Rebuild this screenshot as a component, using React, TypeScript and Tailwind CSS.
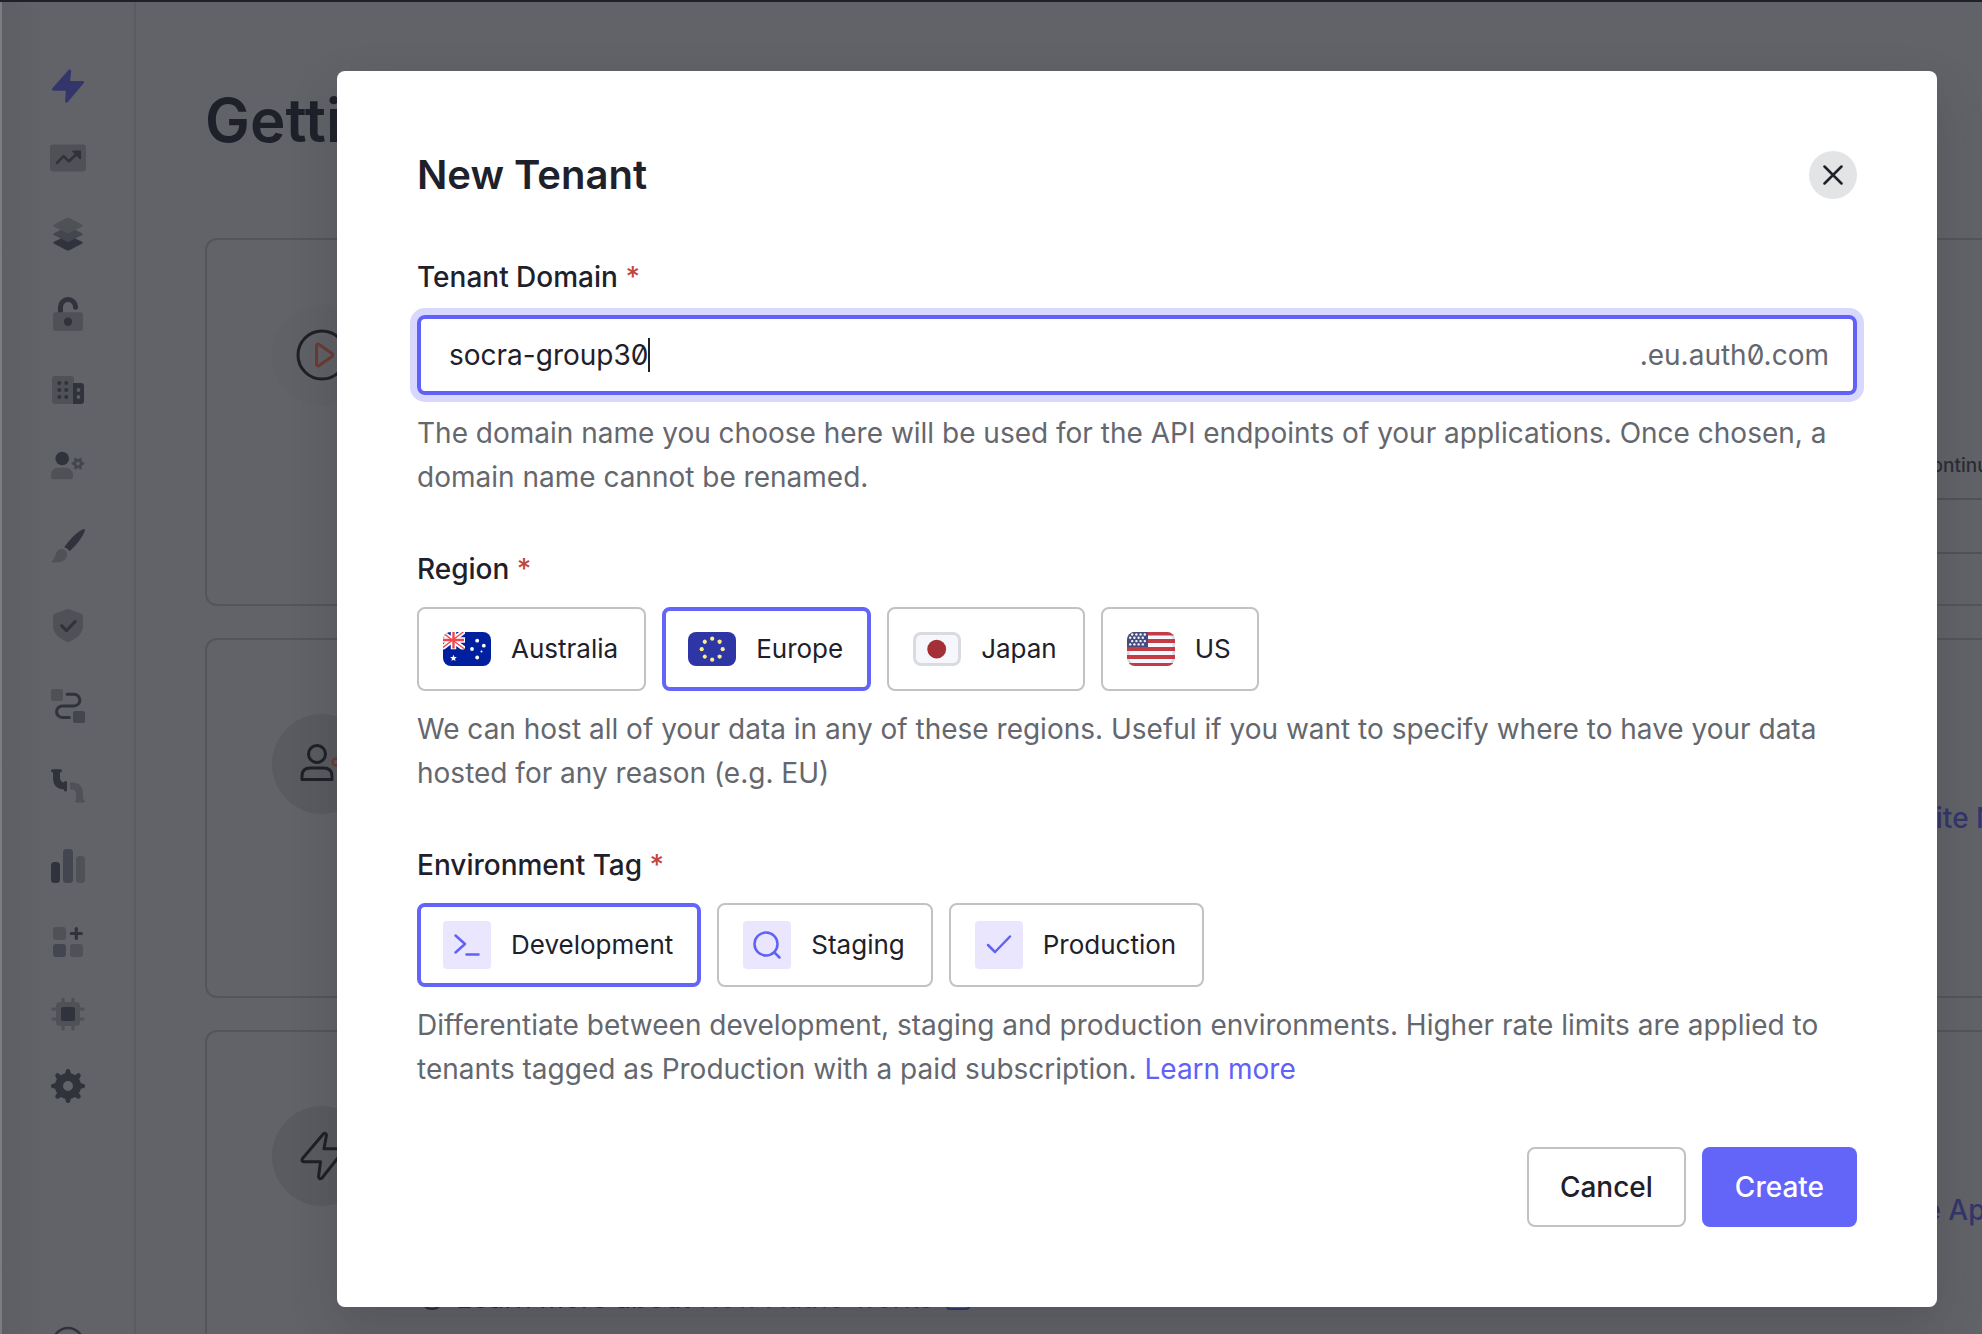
import React, { useState } from "react";

const DARK = "#30333b";
const MID = "#43464e";
const SOFT = "#505156";

type IconProps = { children: React.ReactNode };

function NavIcon({ children }: IconProps) {
  return (
    <svg viewBox="0 0 36 36" className="size-9" fill="none" aria-hidden="true">
      {children}
    </svg>
  );
}

const gearAngles = [0, 45, 90, 135, 180, 225, 270, 315];
const smallGearAngles = [0, 60, 120, 180, 240, 300];

const navItems: { label: string; height: string; icon: React.ReactNode }[] = [
  {
    label: "Getting Started",
    height: "h-18",
    icon: (
      <path
        d="M19.8 2.8 3.4 21.3h14l-.9 12L32.6 14.400h-14z"
        fill="#34356b"
        stroke="#34356b"
        strokeWidth="2.800"
        strokeLinejoin="round"
      />
    ),
  },
  {
    label: "Activity",
    height: "h-18",
    icon: (
      <>
        <rect x="0" y="4.500" width="36" height="27" rx="3" fill={SOFT} />
        <path d="M7 22.800 13.600 16.200 19 21.300 26.500 14" stroke={DARK} strokeWidth="2.600" strokeLinecap="round" strokeLinejoin="round" />
        <path d="M23 11.300h7.300v7.300z" fill={DARK} stroke={DARK} strokeWidth="1.500" strokeLinejoin="round" />
      </>
    ),
  },
  {
    label: "Applications",
    height: "h-20",
    icon: (
      <>
        <path d="M4 25.800 18 19l14 6.800c1.200.6 1.200 1.200 0 1.800l-12.500 6.600q-1.500.8-3 0L4 27.600c-1.200-.6-1.200-1.200 0-1.800z" fill={DARK} />
        <path d="M4 17.200 18 10.400l14 6.800c1.200.6 1.200 1.200 0 1.800l-12.500 6.600q-1.500.8-3 0L4 19c-1.200-.6-1.200-1.200 0-1.800z" fill={MID} />
        <path d="M4 8.600 16.500 1.900q1.500-.8 3 0L32 8.600c1.200.6 1.200 1.200 0 1.800l-12.500 6.600q-1.500.8-3 0L4 10.400c-1.200-.6-1.200-1.200 0-1.800z" fill={SOFT} />
      </>
    ),
  },
  {
    label: "Authentication",
    height: "h-20",
    icon: (
      <>
        <path d="M10.500 17v-6a7.500 7.500 0 0 1 15 0v.3" stroke={DARK} strokeWidth="5" />
        <circle cx="25.500" cy="11.300" r="2.500" fill={DARK} />
        <rect x="3" y="16.300" width="30" height="18.700" rx="3" fill={SOFT} />
        <circle cx="18" cy="25.700" r="4.200" fill={DARK} />
      </>
    ),
  },
  {
    label: "Organizations",
    height: "h-18",
    icon: (
      <>
        <rect x="2" y="4" width="22" height="28" rx="3" fill={SOFT} />
        <path d="M23 11h8a3 3 0 0 1 3 3v15a3 3 0 0 1-3 3h-8z" fill={DARK} />
        {[11, 18, 25].map((y) => (
          <g key={y} fill={DARK}>
            <circle cx="9.300" cy={y} r="2" />
            <circle cx="16.200" cy={y} r="2" />
          </g>
        ))}
        <circle cx="28.500" cy="18" r="1.900" fill="#5c5d62" />
        <circle cx="28.500" cy="25" r="1.900" fill="#5c5d62" />
      </>
    ),
  },
  {
    label: "User Management",
    height: "h-20",
    icon: (
      <>
        <circle cx="12.200" cy="10.500" r="6.800" fill={DARK} />
        <path d="M8 19.700h8a7 7 0 0 1 7 7v2.600a2 2 0 0 1-2 2H3a2 2 0 0 1-2-2v-2.600a7 7 0 0 1 7-7z" fill={SOFT} />
        <g stroke={MID} strokeWidth="2.800" strokeLinecap="round">
          {smallGearAngles.map((a) => (
            <path key={a} d="M28 11.600v-1" transform={`rotate(${a + 30} 28 15.600)`} />
          ))}
          <circle cx="28" cy="15.600" r="3.200" strokeWidth="2.800" />
        </g>
      </>
    ),
  },
  {
    label: "Branding",
    height: "h-20",
    icon: (
      <>
        <path d="M14.300 19.300C19 12 27 4 33 1.200c1.300-.5 2 .3 1.700 1.500C33 9 26 17.500 19.700 23.300q-2.300-3-5.400-4z" fill={DARK} />
        <path d="M11.500 21c3.500 0 5.500 2.500 5.500 5.800 0 6-7 8.200-14.500 7.600-1-.1-1.100-.7-.3-1.300C6 30.500 5 21 11.500 21z" fill={SOFT} />
      </>
    ),
  },
  {
    label: "Security",
    height: "h-20",
    icon: (
      <>
        <path d="M17 1.300q1-.4 2 0L31.500 5.700Q33 6.200 33 8v10c0 8-7.500 13-14 16q-1 .4-2 0C10.500 31 3 26 3 18V8q0-1.800 1.500-2.300z" fill={SOFT} />
        <path d="m11.600 17.600 4.900 5L25.200 13.500" stroke={DARK} strokeWidth="3" strokeLinecap="round" strokeLinejoin="round" />
      </>
    ),
  },
  {
    label: "Actions",
    height: "h-20",
    icon: (
      <>
        <rect x="1" y="1" width="12" height="12" rx="2" fill={SOFT} />
        <rect x="23" y="23" width="12" height="12" rx="2" fill={MID} />
        <path d="M17 6.300h7a5.850 5.850 0 0 1 0 11.700H12.300a5.700 5.700 0 0 0 0 11.400h7" stroke={DARK} strokeWidth="3" strokeLinecap="round" />
      </>
    ),
  },
  {
    label: "Auth Pipeline",
    height: "h-20",
    icon: (
      <>
        <path d="M6.500 3v6.500q0 8.500 8.500 8.500" stroke={DARK} strokeWidth="7" />
        <path d="M2.500 2.700h8M15.500 14.500v7.500" stroke={DARK} strokeWidth="3" strokeLinecap="round" />
        <path d="M20 18h1.500q8 0 8 8v7" stroke={SOFT} strokeWidth="7" />
        <path d="M26.500 33h7" stroke={SOFT} strokeWidth="3" strokeLinecap="round" />
      </>
    ),
  },
  {
    label: "Monitoring",
    height: "h-20",
    icon: (
      <>
        <rect x="1" y="14" width="9" height="21" rx="3.500" fill={DARK} />
        <rect x="13" y="1" width="10" height="34" rx="3.500" fill={MID} />
        <rect x="26" y="8" width="9" height="27" rx="3.500" fill={SOFT} />
      </>
    ),
  },
  {
    label: "Marketplace",
    height: "h-18",
    icon: (
      <>
        <rect x="3" y="3" width="13" height="13" rx="3" fill={SOFT} />
        <rect x="3" y="20" width="13" height="13" rx="3" fill={MID} />
        <rect x="20" y="20" width="13" height="13" rx="3" fill={SOFT} />
        <path d="M26.300 4.500v10M21.300 9.500h10" stroke={DARK} strokeWidth="3.200" strokeLinecap="round" />
      </>
    ),
  },
  {
    label: "Extensions",
    height: "h-18",
    icon: (
      <>
        <path d="M13 3v30M23 3v30M3 13h30M3 23h30" stroke={SOFT} strokeWidth="3.200" strokeLinecap="round" />
        <rect x="6" y="6" width="24" height="24" rx="4" fill={SOFT} />
        <rect x="11" y="11" width="14" height="14" rx="2.500" fill={DARK} />
      </>
    ),
  },
  {
    label: "Settings",
    height: "h-18",
    icon: (
      <>
        <circle cx="18" cy="18" r="9" stroke={DARK} strokeWidth="8" />
        {gearAngles.map((a) => (
          <path
            key={a}
            d="M13.500 7.500Q15.500 6 15.700 3.200a2.300 2.300 0 0 1 4.600 0Q20.500 6 22.500 7.500z"
            fill={DARK}
            transform={`rotate(${a} 18 18)`}
          />
        ))}
      </>
    ),
  },
];

function Sidebar() {
  return (
    <aside className="w-[136px] shrink-0 border-r-2 border-[#5b5c62] border-l-2 border-l-[#7b7c81] bg-linear-to-r from-[#5e5f64] to-[#626368] to-30% pt-12">
      <nav className="flex flex-col">
        {navItems.map((item) => (
          <a key={item.label} href="#" aria-label={item.label} className={`flex items-center justify-center ${item.height}`}>
            <NavIcon>{item.icon}</NavIcon>
          </a>
        ))}
        <a href="#" aria-label="Help" className="mt-[204px] flex justify-center">
          <NavIcon>
            <circle cx="18" cy="17" r="15" stroke={DARK} strokeWidth="2.500" />
          </NavIcon>
        </a>
      </nav>
    </aside>
  );
}

function Medallion({ tone, children }: { tone: string; children: React.ReactNode }) {
  return (
    <div className={`size-[100px] shrink-0 rounded-full ${tone}`}>
      <svg viewBox="0 0 100 100" className="size-full" fill="none" strokeLinejoin="round" strokeLinecap="round" aria-hidden="true">
        {children}
      </svg>
    </div>
  );
}

function Background() {
  return (
    <div className="flex min-h-0 flex-1 border-t-2 border-[#1f2029]">
      <Sidebar />
      <main className="min-w-0 flex-1 pt-20 pl-[69px]">
        <h1 className="text-[60px] leading-[76px] font-semibold text-[#1e212a]">Getting Started</h1>

        <div className="mt-20 flex w-[110%] flex-col gap-8">
          <section className="flex h-[368px] justify-between rounded-xl border-2 border-[#54555a]">
            <div className="pt-[65px] pl-[65px]">
              <Medallion tone="bg-[#606166]">
                <circle cx="50" cy="50" r="24" stroke="#1e2026" strokeWidth="3" />
                <path d="M44.500 40.500v19a1.500 1.500 0 0 0 2.300 1.200L60 51.500a1.800 1.800 0 0 0 0-3L46.800 39.300a1.500 1.500 0 0 0-2.300 1.200z" stroke="#6b3b34" strokeWidth="3" />
              </Medallion>
            </div>
            <div className="mt-10 mr-[60px] flex w-[212px] flex-col text-[#2b2d35]">
              <p className="mt-[170px] pb-4 pl-8 text-[19px] leading-8 font-medium">Continue</p>
              <div className="h-14 border-y-2 border-[#51535b]" />
            </div>
          </section>

          <section className="flex h-90 items-start justify-between rounded-xl border-2 border-[#54555a] pt-[74px] pl-[65px]">
            <Medallion tone="bg-[#5a5b60]">
              <circle cx="45" cy="40" r="8.500" stroke="#1e2026" strokeWidth="3" />
              <path d="M30 65.500V62q0-8 8-8h13.500q8.500 0 8.500 8v3.500z" stroke="#1e2026" strokeWidth="3" />
              <circle cx="64" cy="48" r="3.500" stroke="#6b3b34" strokeWidth="2.500" />
            </Medallion>
            <a href="#" className="mt-[86px] w-[262px] text-[28px] leading-9 font-medium whitespace-nowrap text-[#34356b]">Invite New Members</a>
          </section>

          <section className="flex h-[400px] items-start justify-between rounded-xl border-2 border-[#54555a] pt-[74px] pl-[65px]">
            <Medallion tone="bg-[#5a5b60]">
              <path d="M51.500 27.800 30.500 52.500q-1.500 3 1.500 3.200h16.500L46.500 71q1 3 3.500 1l20.500-26q1.500-3-1.500-3.200H52L54.500 29q-.5-2.500-3-1.200z" stroke="#1e2026" strokeWidth="3" />
            </Medallion>
            <p className="mt-[174px] ml-12 flex flex-1 items-center gap-3 text-[28px] leading-9 text-[#2b2d35]">
              <span className="size-6 rounded-full border-2 border-[#2b2d35]" />
              <span>
                Learn more about <a href="#" className="text-[#34356b]">How Auth0 works</a>
              </span>
              <span className="size-6 rounded border-2 border-[#34356b]" />
            </p>
            <a href="#" className="mt-[86px] w-[306px] text-[28px] leading-9 font-medium whitespace-nowrap text-[#34356b]">Create Application</a>
          </section>
        </div>
      </main>
    </div>
  );
}

const starPoints = (cx: number, cy: number, r: number) =>
  Array.from({ length: 10 }, (_, i) => {
    const radius = i % 2 ? r * 0.45 : r;
    const angle = (Math.PI * i) / 5 - Math.PI / 2;
    return `${(cx + radius * Math.cos(angle)).toFixed(2)},${(cy + radius * Math.sin(angle)).toFixed(2)}`;
  }).join(" ");

function Flag({ id, children }: { id: string; children: React.ReactNode }) {
  return (
    <svg viewBox="0 0 48 34" className="h-[34px] w-12" aria-hidden="true">
      <clipPath id={id}>
        <rect width="48" height="34" rx="8" />
      </clipPath>
      <g clipPath={`url(#${id})`}>{children}</g>
    </svg>
  );
}

const flags = {
  au: (
    <Flag id="flag-au">
      <rect width="48" height="34" fill="#00209f" />
      <clipPath id="au-canton">
        <rect width="22" height="17.500" />
      </clipPath>
      <g clipPath="url(#au-canton)" fill="none">
        <path d="M-1.500 0 21.500 17M21.500-1-1.500 16.500" stroke="#fff" strokeWidth="5" />
        <path d="M10.500 0v17.500M0 8h22" stroke="#fff" strokeWidth="5.500" />
        <path d="M-1.500 0 21.500 17M21.500-1-1.500 16.500" stroke="#f0474f" strokeWidth="1.300" />
        <path d="M10.500 0v16.500M0 8h21" stroke="#f0474f" strokeWidth="2.400" />
      </g>
      <g fill="#fff">
        <polygon points={starPoints(10.5, 26.2, 3.5)} />
        <circle cx="34.200" cy="8.700" r="1.900" />
        <circle cx="29" cy="17" r="1.900" />
        <circle cx="40.800" cy="13.700" r="1.900" />
        <circle cx="38.500" cy="19.500" r="1" />
        <circle cx="34.200" cy="25.500" r="1.900" />
      </g>
    </Flag>
  ),
  eu: (
    <Flag id="flag-eu">
      <rect width="48" height="34" fill="#2d36a4" />
      {[0, 45, 90, 135, 180, 225, 270, 315].map((a) => (
        <circle key={a} cx="24.200" cy="6.700" r="2.100" fill="#fbee8b" transform={`rotate(${a} 24.200 17.200)`} />
      ))}
    </Flag>
  ),
  jp: (
    <Flag id="flag-jp">
      <rect width="48" height="34" fill="#d9dbe0" />
      <rect x="3" y="3" width="42" height="28" rx="5" fill="#f6f7fc" />
      <circle cx="23.700" cy="17.200" r="9.400" fill="#a52f37" />
    </Flag>
  ),
  us: (
    <Flag id="flag-us">
      <rect width="48" height="34" fill="#d9dbe0" />
      <rect x="2.500" y="2.500" width="43" height="29" rx="5" fill="#f6f7fc" />
      <path d="M0 1.500h48M0 9h48M0 17h48M0 25h48M0 33h48" stroke="#c23b45" strokeWidth="3.800" />
      <rect width="21" height="15" fill="#464c7d" />
      <g fill="#f6f7fc">
        {[2.5, 5.8, 9.1, 12.4].map((y, row) =>
          [3.2, 7.4, 11.6, 15.8].map((x) => <circle key={`${x}-${y}`} cx={row % 2 ? x : x + 2} cy={y} r="1.200" />),
        )}
      </g>
    </Flag>
  ),
};

function Tile({ children }: { children: React.ReactNode }) {
  return (
    <span className="flex size-12 items-center justify-center rounded-sm bg-[#e9e6fd]">
      <svg viewBox="0 0 48 48" className="size-12" fill="none" stroke="#6061f6" strokeWidth="2.500" strokeLinecap="round" strokeLinejoin="round" aria-hidden="true">
        {children}
      </svg>
    </span>
  );
}

type Option = { value: string; label: string; icon: React.ReactNode };

const regions: Option[] = [
  { value: "au", label: "Australia", icon: flags.au },
  { value: "eu", label: "Europe", icon: flags.eu },
  { value: "jp", label: "Japan", icon: flags.jp },
  { value: "us", label: "US", icon: flags.us },
];

const environments: Option[] = [
  {
    value: "development",
    label: "Development",
    icon: (
      <Tile>
        <path d="m12.500 14.500 9.500 8.500-9.500 8.500M23.500 33.500h12" />
      </Tile>
    ),
  },
  {
    value: "staging",
    label: "Staging",
    icon: (
      <Tile>
        <circle cx="23" cy="23" r="11.500" />
        <path d="m31.500 31.500 5 5" />
      </Tile>
    ),
  },
  {
    value: "production",
    label: "Production",
    icon: (
      <Tile>
        <path d="m13 24 7 7 15-15.500" />
      </Tile>
    ),
  },
];

function Required() {
  return <span className="text-[#c0473f]"> *</span>;
}

function OptionGroup({ name, title, options, initial, help }: { name: string; title: string; options: Option[]; initial: string; help: React.ReactNode }) {
  const [value, setValue] = useState(initial);
  return (
    <fieldset className="mt-4">
      <legend className="pt-8 text-[28px] leading-11 font-medium text-[#1e212a]">
        {title}
        <Required />
      </legend>
      <div className="mt-4 flex gap-4">
        {options.map((option) => (
          <label
            key={option.value}
            className="relative flex h-[84px] cursor-pointer items-center gap-5 rounded-lg border-2 border-[#c2c2c3] pr-[26px] pl-6 text-[26px] leading-10 text-[#1e212a] has-checked:border-4 has-checked:border-[#6364f8] has-checked:pr-6 has-checked:pl-[22px]"
          >
            <input
              type="radio"
              name={name}
              value={option.value}
              checked={value === option.value}
              onChange={() => setValue(option.value)}
              className="sr-only"
            />
            {option.icon}
            {option.label}
          </label>
        ))}
      </div>
      <p className="mt-4 text-[28px] leading-11 text-[#65676e]">{help}</p>
    </fieldset>
  );
}

export default function App() {
  const [domain, setDomain] = useState("socra-group30");

  return (
    <div className="relative flex h-screen flex-col overflow-hidden bg-[#626368] font-['Inter',sans-serif]">
      <Background />

      <div className="absolute inset-0 flex items-start pt-[71px] pr-[45px] pl-[337px]">
        <div
          role="dialog"
          aria-modal="true"
          aria-labelledby="dialog-title"
          className="w-full rounded-lg bg-white p-20 shadow-[0_20px_48px_rgba(30,33,42,0.2)]"
        >
          <header className="flex h-12 items-center justify-between">
            <h2 id="dialog-title" className="text-[40px] leading-12 font-semibold text-[#1e212a]">
              New Tenant
            </h2>
            <button type="button" aria-label="Close" className="flex size-12 items-center justify-center rounded-full bg-[#e3e4e6]">
              <svg viewBox="0 0 20 20" className="size-5" stroke="#1e212a" strokeWidth="2.500" strokeLinecap="round" aria-hidden="true">
                <path d="m1.500 1.500 17 17M18.500 1.500l-17 17" />
              </svg>
            </button>
          </header>

          <form onSubmit={(event) => event.preventDefault()}>
            <label htmlFor="tenant-domain" className="mt-14 block text-[28px] leading-11 font-medium text-[#1e212a]">
              Tenant Domain
              <Required />
            </label>
            <div className="mt-4 flex h-20 items-center rounded-lg border-4 border-[#6061f8] pr-6 pl-7 text-[28px] ring-7 ring-[#d8d8fe]">
              <input
                id="tenant-domain"
                type="text"
                value={domain}
                onChange={(event) => setDomain(event.target.value)}
                aria-describedby="tenant-help"
                className="field-sizing-content text-[#1e212a] slashed-zero caret-transparent outline-none"
              />
              <span className="h-[34px] w-0.5 bg-[#1e212a]" />
              <span className="ml-auto text-[#65676e] slashed-zero">.eu.auth0.com</span>
            </div>
            <p id="tenant-help" className="mt-4 text-[28px] leading-11 text-[#65676e]">
              The domain name you choose here will be used for the API endpoints of your applications. Once chosen, a domain name cannot be renamed.
            </p>

            <OptionGroup
              name="region"
              title="Region"
              options={regions}
              initial="eu"
              help="We can host all of your data in any of these regions. Useful if you want to specify where to have your data hosted for any reason (e.g. EU)"
            />

            <OptionGroup
              name="environment"
              title="Environment Tag"
              options={environments}
              initial="development"
              help={
                <>
                  Differentiate between development, staging and production environments. Higher rate limits are applied to tenants tagged as Production with a paid subscription.{" "}
                  <a href="#" className="text-[#6061f8]">Learn more</a>
                </>
              }
            />

            <footer className="mt-14 flex justify-end gap-4 text-[28px] font-medium">
              <button type="button" className="h-20 rounded-lg border-2 border-[#c2c2c3] px-[31px] text-[#1e212a]">
                Cancel
              </button>
              <button type="submit" className="h-20 rounded-lg bg-[#6364f8] px-[33px] text-white">
                Create
              </button>
            </footer>
          </form>
        </div>
      </div>
    </div>
  );
}
